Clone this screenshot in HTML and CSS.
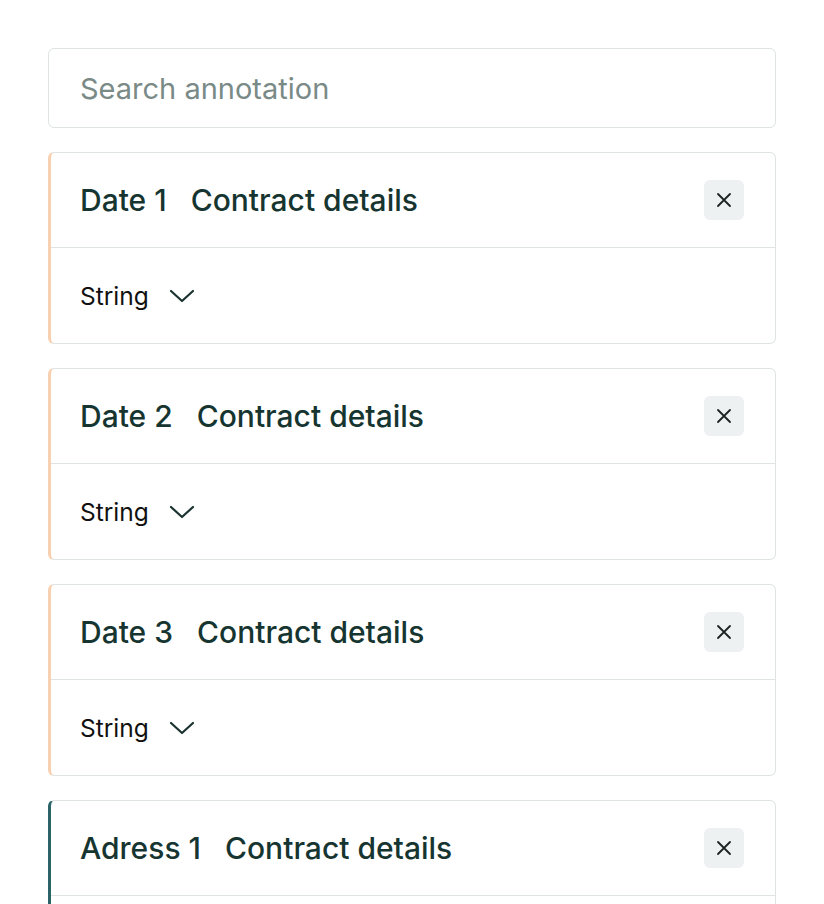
FILE: index.html
```html
<!DOCTYPE html>
<html lang="en">
<head>
    <meta charset="UTF-8">
    <meta name="viewport" content="width=device-width, initial-scale=1.0">
    <title>Annotations</title>
    <link rel="stylesheet" href="styles.css">
</head>
<body>
    <div class="panel">
        <input type="text" class="search" placeholder="Search annotation">

        <div class="card date">
            <div class="card-head">
                <h2><span class="label">Date 1</span>Contract details</h2>
                <button class="close" aria-label="Remove">
                    <svg width="18" height="18" viewBox="0 0 18 18"><path d="M3 3L15 15M15 3L3 15" stroke="#1b2422" stroke-width="1.8" stroke-linecap="round"/></svg>
                </button>
            </div>
            <div class="card-body">
                <span class="type">String</span>
                <svg class="chevron" width="26" height="16" viewBox="0 0 26 16"><path d="M2 3L13 13L24 3" fill="none" stroke="#1a3330" stroke-width="2.2" stroke-linecap="round" stroke-linejoin="round"/></svg>
            </div>
        </div>

        <div class="card date">
            <div class="card-head">
                <h2><span class="label">Date 2</span>Contract details</h2>
                <button class="close" aria-label="Remove">
                    <svg width="18" height="18" viewBox="0 0 18 18"><path d="M3 3L15 15M15 3L3 15" stroke="#1b2422" stroke-width="1.8" stroke-linecap="round"/></svg>
                </button>
            </div>
            <div class="card-body">
                <span class="type">String</span>
                <svg class="chevron" width="26" height="16" viewBox="0 0 26 16"><path d="M2 3L13 13L24 3" fill="none" stroke="#1a3330" stroke-width="2.2" stroke-linecap="round" stroke-linejoin="round"/></svg>
            </div>
        </div>

        <div class="card date">
            <div class="card-head">
                <h2><span class="label">Date 3</span>Contract details</h2>
                <button class="close" aria-label="Remove">
                    <svg width="18" height="18" viewBox="0 0 18 18"><path d="M3 3L15 15M15 3L3 15" stroke="#1b2422" stroke-width="1.8" stroke-linecap="round"/></svg>
                </button>
            </div>
            <div class="card-body">
                <span class="type">String</span>
                <svg class="chevron" width="26" height="16" viewBox="0 0 26 16"><path d="M2 3L13 13L24 3" fill="none" stroke="#1a3330" stroke-width="2.2" stroke-linecap="round" stroke-linejoin="round"/></svg>
            </div>
        </div>

        <div class="card address">
            <div class="card-head">
                <h2><span class="label">Adress 1</span>Contract details</h2>
                <button class="close" aria-label="Remove">
                    <svg width="18" height="18" viewBox="0 0 18 18"><path d="M3 3L15 15M15 3L3 15" stroke="#1b2422" stroke-width="1.8" stroke-linecap="round"/></svg>
                </button>
            </div>
            <div class="card-body">
                <span class="type">String</span>
                <svg class="chevron" width="26" height="16" viewBox="0 0 26 16"><path d="M2 3L13 13L24 3" fill="none" stroke="#1a3330" stroke-width="2.2" stroke-linecap="round" stroke-linejoin="round"/></svg>
            </div>
        </div>
    </div>
</body>
</html>
```

FILE: styles.css
```css
body {
    margin: 0;
    background: #ffffff;
    font-family: Inter, "Noto Sans", sans-serif;
    color: #163530;
}
.panel {
    padding: 48px;
    display: flex;
    flex-direction: column;
    gap: 24px;
}
.search {
    box-sizing: border-box;
    width: 100%;
    height: 80px;
    padding: 0 31px;
    border: 1px solid #e0e3e3;
    border-radius: 6px;
    font-family: inherit;
    font-size: 29px;
    color: #163530;
    outline: none;
}
.search::placeholder {
    color: #7a8a87;
}
.card {
    border: 1px solid #e0e3e3;
    border-left: 3px solid #f7cfb1;
    border-radius: 6px;
}
.card.address {
    border-left-color: #2a6468;
}
.card-head {
    height: 94px;
    display: flex;
    align-items: center;
    justify-content: space-between;
    padding: 0 31px 0 29px;
    border-bottom: 1px solid #e0e3e3;
}
.card-head h2 {
    margin: 0;
    font-size: 30px;
    font-weight: 500;
    color: #163530;
}
.label {
    margin-right: 24px;
}
.close {
    width: 40px;
    height: 40px;
    border: none;
    border-radius: 6px;
    background: #eef1f2;
    display: flex;
    align-items: center;
    justify-content: center;
    cursor: pointer;
    padding: 0;
}
.card-body {
    height: 95px;
    display: flex;
    align-items: center;
    gap: 20px;
    padding: 0 29px;
}
.type {
    font-size: 24.5px;
    color: #111111;
}
```
